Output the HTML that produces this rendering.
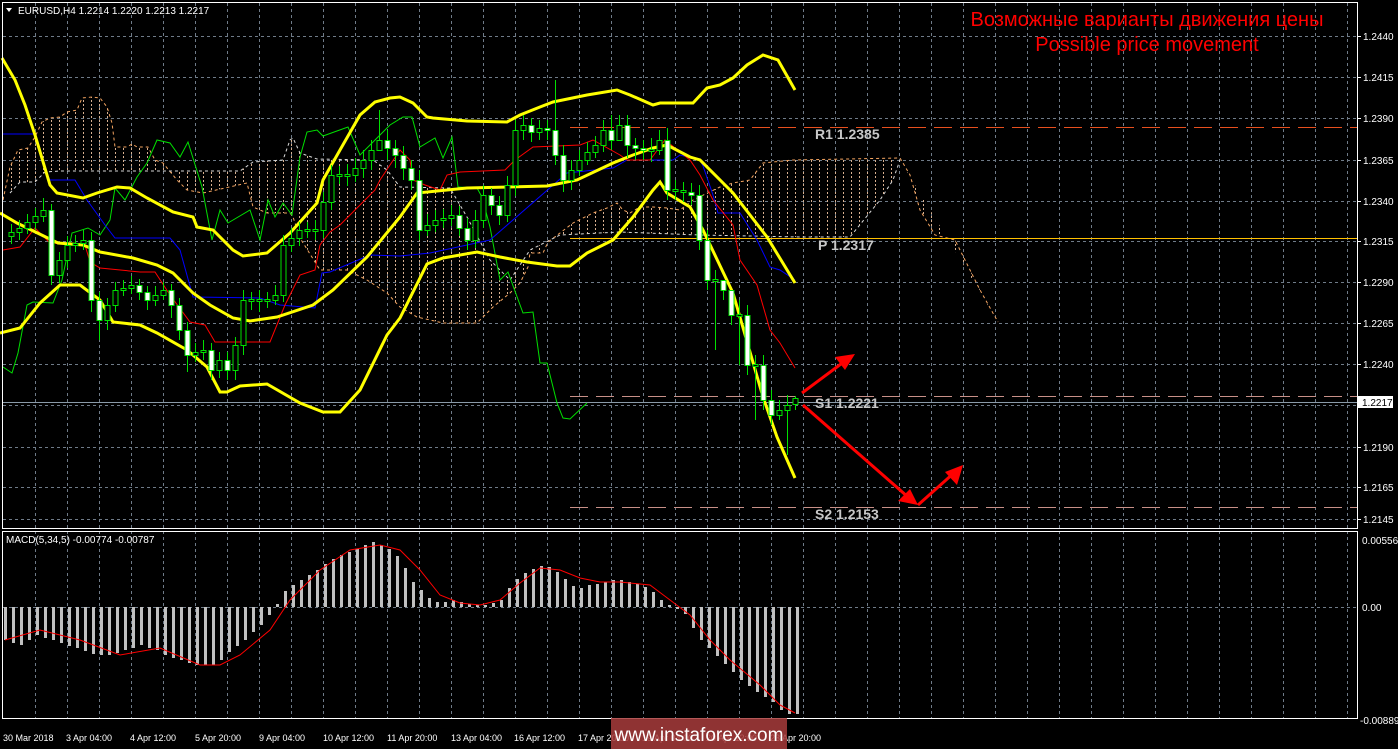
<!DOCTYPE html>
<html><head><meta charset="utf-8"><style>
html,body{margin:0;padding:0;background:#000;width:1398px;height:749px;overflow:hidden}
svg{display:block}
text{font-family:"Liberation Sans",sans-serif}
</style></head><body>
<svg width="1398" height="749" xmlns="http://www.w3.org/2000/svg">
<defs>
<pattern id="hatch" width="8" height="4" patternUnits="userSpaceOnUse">
<rect x="3" y="0" width="1" height="2" fill="#d8b090"/>
</pattern>
</defs>
<rect width="1398" height="749" fill="#000"/>
<!-- grid -->
<path stroke="#6f7b88" stroke-width="1" stroke-dasharray="3,3" fill="none" d="M35.5 3V718M67.5 3V718M99.5 3V718M131.5 3V718M163.5 3V718M195.5 3V718M227.5 3V718M259.5 3V718M291.5 3V718M323.5 3V718M355.5 3V718M387.5 3V718M419.5 3V718M451.5 3V718M483.5 3V718M515.5 3V718M547.5 3V718M579.5 3V718M611.5 3V718M643.5 3V718M675.5 3V718M707.5 3V718M739.5 3V718M771.5 3V718M803.5 3V718M835.5 3V718M867.5 3V718M899.5 3V718M931.5 3V718M963.5 3V718M995.5 3V718M1027.5 3V718M1059.5 3V718M1091.5 3V718M1123.5 3V718M1155.5 3V718M1187.5 3V718M1219.5 3V718M1251.5 3V718M1283.5 3V718M1315.5 3V718M1347.5 3V718
M3 36.5H1357M3 77.5H1357M3 118.5H1357M3 160.5H1357M3 201.5H1357M3 241.5H1357M3 282.5H1357M3 323.5H1357M3 364.5H1357M3 405.5H1357M3 447.5H1357M3 487.5H1357M3 519.5H1357M3 607.5H1357"/>
<!-- cloud hatch -->
<polygon fill="url(#hatch)" fill-rule="evenodd" points="3,200 10,167 18,150 28,148 35,137 42,122 50,118 60,117 67,112 77,110 82,98 92,97 100,98 107,107 112,123 115,147 127,147 132,144 137,147 148,147 155,160 163,163 177,180 187,190 203,193 247,183 253,207 267,213 290,213 293,217 300,238 320,270 347,270 367,280 387,293 400,307 417,317 443,323 477,323 493,307 510,293 520,283 528,267 530,253 543,253 548,242 560,233 573,223 593,213 607,208 617,203 623,210 630,213 640,207 653,207 667,208 680,210 693,200 720,187 733,183 750,180 763,163 793,160 900,158 910,175 920,210 935,235 955,240 965,260 980,290 998,322 900,160 893,180 880,200 850,237 800,237 700,235 620,232 560,235 530,250 510,280 490,260 467,217 450,188 400,187 387,170 373,160 317,159 300,153 293,138 290,140 283,160 253,162 240,171 60,171 45,172 35,182 20,182 10,193"/>
<polyline fill="none" stroke="#f4a460" stroke-width="1" stroke-dasharray="3,3" points="3,200 10,167 18,150 28,148 35,137 42,122 50,118 60,117 67,112 77,110 82,98 92,97 100,98 107,107 112,123 115,147 127,147 132,144 137,147 148,147 155,160 163,163 177,180 187,190 203,193 247,183 253,207 267,213 290,213 293,217 300,238 320,270 347,270 367,280 387,293 400,307 417,317 443,323 477,323 493,307 510,293 520,283 528,267 530,253 543,253 548,242 560,233 573,223 593,213 607,208 617,203 623,210 630,213 640,207 653,207 667,208 680,210 693,200 720,187 733,183 750,180 763,163 793,160 900,158 910,175 920,210 935,235 955,240 965,260 980,290 998,322"/>
<polyline fill="none" stroke="#d8d8d8" stroke-width="1" stroke-dasharray="3,3" points="10,193 20,182 35,182 45,172 60,171 240,171 253,162 283,160 290,140 293,138 300,153 317,159 373,160 387,170 400,187 450,188 467,217 490,260 510,280 530,250 560,235 620,232 700,235 800,237 850,237 880,200 893,180 900,160"/>
<!-- levels -->
<line x1="570" y1="127.5" x2="1357" y2="127.5" stroke="#e8501e" stroke-dasharray="18,8"/>
<line x1="570" y1="238.5" x2="1357" y2="238.5" stroke="#ffc000"/>
<line x1="570" y1="396.5" x2="1357" y2="396.5" stroke="#c89088" stroke-dasharray="18,8"/>
<line x1="570" y1="507.5" x2="1357" y2="507.5" stroke="#c89088" stroke-dasharray="18,8"/>
<line x1="2" y1="402.5" x2="1357" y2="402.5" stroke="#8a9aa8"/>
<!-- lines -->
<polyline fill="none" stroke="#00e000" stroke-width="1" points="3,367 12,373 18,353 27,305 33,302 53,303 62,280 72,233 88,228 100,235 110,220 115,188 125,200 137,177 147,163 157,140 170,143 180,157 188,142 202,187 212,240 220,210 228,223 250,210 260,240 268,200 275,217 283,203 292,215 300,157 307,132 317,130 323,136 348,127 360,155 375,140 390,125 403,117 412,117 420,147 435,138 443,158 452,137 458,187 477,188 482,197 490,227 500,280 508,272 523,313 533,312 540,363 547,363 557,403 563,418 570,419 587,403"/>
<polyline fill="none" stroke="#0000ff" stroke-width="1" points="3,134 35,134 40,150 45,170 50,180 75,180 87,200 105,225 115,238 170,238 180,250 193,297 260,298 280,305 315,308 322,273 330,272 370,255 400,256 430,253 467,245 490,240 567,173 613,168 627,160 673,160 680,155 700,160 703,166 713,195 718,213 740,213 757,240 770,267 780,270 795,280"/>
<polyline fill="none" stroke="#ff0000" stroke-width="1" points="3,250 20,247 35,228 50,243 85,245 90,262 100,268 140,272 155,272 170,295 190,322 205,325 215,342 270,342 285,305 300,275 315,270 320,245 330,232 340,225 360,205 375,190 380,180 400,150 410,160 413,180 425,185 440,190 447,175 460,172 505,170 515,160 533,147 580,145 593,140 620,155 627,160 650,160 665,140 690,160 700,175 713,200 733,225 740,260 757,285 770,330 780,343 795,368"/>
<g fill="none" stroke="#ffff00" stroke-width="3">
<polyline points="2,58 15,80 25,105 35,135 50,185 57,193 83,198 97,193 117,187 130,188 147,198 173,212 193,217 197,227 213,230 233,250 243,256 267,253 290,233 317,203 323,180 340,150 360,115 375,102 390,98 400,97 413,103 427,117 433,118 467,121 507,122 520,115 540,107 553,102 587,95 617,90 630,95 653,105 660,103 693,103 707,88 720,85 733,78 747,65 763,55 778,60 795,90"/>
<polyline points="0,213 17,223 58,243 83,245 100,252 133,258 157,265 173,273 193,293 210,305 233,318 250,321 277,317 313,305 333,290 367,257 400,217 417,193 467,188 547,186 577,180 613,163 633,155 653,148 667,145 690,157 700,160 733,193 767,237 795,283"/>
<polyline points="0,333 20,328 40,303 60,285 80,285 100,300 113,322 140,325 157,333 187,350 207,367 220,392 227,392 240,386 267,384 300,403 323,412 340,412 360,390 387,335 400,318 427,264 443,258 477,252 500,257 527,262 557,266 570,266 587,253 613,240 633,217 653,190 660,182 667,193 690,207 703,230 733,293 763,397 777,437 795,478"/>
</g>
<!-- candle wicks -->
<path stroke="#00e000" stroke-width="1" fill="none" d="M11.5 224V244M19.5 220V240M27.5 214V234M35.5 208V230M43.5 198V222M51.5 204V285M59.5 252V283M67.5 236V268M75.5 235V252M83.5 230V250M91.5 232V312M99.5 292V340M107.5 298V330M115.5 282V312M123.5 280V296M131.5 276V294M139.5 279V300M147.5 286V310M155.5 286V306M163.5 282V300M171.5 284V318M179.5 298V340M187.5 322V372M195.5 343V362M203.5 340V360M211.5 343V380M219.5 352V378M227.5 352V380M235.5 337V380M243.5 290V355M251.5 292V310M259.5 290V312M267.5 292V308M275.5 285V305M283.5 235V302M291.5 228V252M299.5 222V246M307.5 222V238M315.5 220V240M323.5 192V238M331.5 165V210M339.5 166V184M347.5 164V186M355.5 158V182M363.5 150V178M371.5 140V170M379.5 110V150M387.5 130V160M395.5 140V168M403.5 146V180M411.5 160V190M419.5 170V240M427.5 214V236M435.5 210V232M443.5 209V228M451.5 205V226M459.5 206V236M467.5 218V250M475.5 210V248M483.5 185V228M491.5 188V215M499.5 196V225M507.5 176V222M515.5 120V196M523.5 115V140M531.5 118V142M539.5 120V140M547.5 120V140M555.5 80V165M563.5 145V192M571.5 160V190M579.5 150V176M587.5 142V165M595.5 136V158M603.5 120V152M611.5 115V150M619.5 115V140M627.5 115V158M635.5 138V160M643.5 140V160M651.5 138V162M659.5 130V155M667.5 128V200M675.5 180V200M683.5 182V202M691.5 183V205M699.5 185V250M707.5 230V290M715.5 270V350M723.5 280V300M731.5 305V325M739.5 300V365M747.5 305V375M755.5 355V420M763.5 355V410M771.5 390V425M779.5 400V420M787.5 395V455M795.5 396V410"/>
<g stroke="#00e000" stroke-width="1">
<g fill="#000">
<rect x="9" y="232.5" width="5" height="4"/><rect x="17" y="228.5" width="5" height="4"/><rect x="25" y="222.5" width="5" height="6"/><rect x="33" y="216.5" width="5" height="6"/><rect x="41" y="210.5" width="5" height="6"/>
<rect x="57" y="260.5" width="5" height="15"/><rect x="65" y="245.5" width="5" height="15"/><rect x="73" y="243.5" width="5" height="2"/><rect x="81" y="240.5" width="5" height="3"/>
<rect x="105" y="305.5" width="5" height="15"/><rect x="113" y="290.5" width="5" height="15"/><rect x="121" y="288.5" width="5" height="2"/><rect x="129" y="285.5" width="5" height="3"/>
<rect x="153" y="295.5" width="5" height="5"/><rect x="161" y="290.5" width="5" height="5"/>
<rect x="193" y="352.5" width="5" height="3"/><rect x="201" y="350.5" width="5" height="2"/><rect x="217" y="360.5" width="5" height="10"/><rect x="233" y="345.5" width="5" height="25"/><rect x="241" y="300.5" width="5" height="45"/>
<rect x="249" y="299.5" width="5" height="2"/><rect x="257" y="299.5" width="5" height="2"/><rect x="265" y="299.5" width="5" height="2"/><rect x="273" y="295.5" width="5" height="5"/><rect x="281" y="245.5" width="5" height="50"/><rect x="289" y="238.5" width="5" height="7"/><rect x="297" y="230.5" width="5" height="8"/><rect x="305" y="229.5" width="5" height="2"/><rect x="313" y="229.5" width="5" height="2"/>
<rect x="321" y="202.5" width="5" height="28"/><rect x="329" y="175.5" width="5" height="27"/><rect x="337" y="174.5" width="5" height="2"/><rect x="345" y="174.5" width="5" height="2"/><rect x="353" y="168.5" width="5" height="7"/><rect x="361" y="160.5" width="5" height="8"/><rect x="369" y="150.5" width="5" height="10"/><rect x="377" y="140.5" width="5" height="10"/>
<rect x="425" y="225.5" width="5" height="5"/><rect x="433" y="220.5" width="5" height="5"/><rect x="441" y="218.5" width="5" height="2"/><rect x="449" y="215.5" width="5" height="3"/><rect x="473" y="220.5" width="5" height="20"/><rect x="481" y="195.5" width="5" height="25"/><rect x="505" y="185.5" width="5" height="30"/><rect x="513" y="130.5" width="5" height="55"/>
<rect x="521" y="125.5" width="5" height="5"/><rect x="537" y="128.5" width="5" height="4"/><rect x="569" y="170.5" width="5" height="10"/><rect x="577" y="160.5" width="5" height="10"/><rect x="585" y="152.5" width="5" height="8"/><rect x="593" y="145.5" width="5" height="7"/><rect x="601" y="130.5" width="5" height="15"/><rect x="617" y="125.5" width="5" height="15"/><rect x="649" y="149.5" width="5" height="2"/><rect x="657" y="140.5" width="5" height="10"/>
<rect x="673" y="189.5" width="5" height="2"/><rect x="681" y="190.5" width="5" height="2"/><rect x="713" y="279.5" width="5" height="2"/><rect x="737" y="314.5" width="5" height="2"/><rect x="753" y="364.5" width="5" height="2"/><rect x="777" y="410.5" width="5" height="5"/><rect x="785" y="405.5" width="5" height="5"/><rect x="793" y="398.5" width="5" height="6"/>
</g>
<g fill="#fff">
<rect x="49" y="210.5" width="5" height="65"/><rect x="89" y="240.5" width="5" height="60"/><rect x="97" y="300.5" width="5" height="20"/><rect x="137" y="285.5" width="5" height="7"/><rect x="145" y="292.5" width="5" height="8"/><rect x="169" y="290.5" width="5" height="15"/><rect x="177" y="305.5" width="5" height="25"/><rect x="185" y="330.5" width="5" height="25"/><rect x="209" y="350.5" width="5" height="20"/><rect x="225" y="360.5" width="5" height="10"/>
<rect x="385" y="140.5" width="5" height="8"/><rect x="393" y="148.5" width="5" height="7"/><rect x="401" y="155.5" width="5" height="13"/><rect x="409" y="168.5" width="5" height="12"/><rect x="417" y="180.5" width="5" height="50"/><rect x="457" y="215.5" width="5" height="13"/><rect x="465" y="228.5" width="5" height="12"/><rect x="489" y="195.5" width="5" height="10"/><rect x="497" y="205.5" width="5" height="10"/>
<rect x="529" y="125.5" width="5" height="7"/><rect x="545" y="128.5" width="5" height="2"/><rect x="553" y="130.5" width="5" height="25"/><rect x="561" y="155.5" width="5" height="25"/><rect x="609" y="130.5" width="5" height="10"/><rect x="625" y="125.5" width="5" height="20"/><rect x="633" y="145.5" width="5" height="3"/><rect x="641" y="148.5" width="5" height="2"/><rect x="665" y="140.5" width="5" height="50"/><rect x="689" y="192.5" width="5" height="3"/>
<rect x="697" y="195.5" width="5" height="45"/><rect x="705" y="240.5" width="5" height="40"/><rect x="721" y="280.5" width="5" height="10"/><rect x="729" y="290.5" width="5" height="25"/><rect x="745" y="315.5" width="5" height="50"/><rect x="761" y="365.5" width="5" height="35"/><rect x="769" y="400.5" width="5" height="15"/>
</g>
</g>
<!-- arrows -->
<g stroke="#ff0000" stroke-width="3" fill="#ff0000">
<line x1="802" y1="393" x2="845" y2="361"/>
<polygon points="855,354 835,357 845,370" stroke="none"/>
<line x1="803" y1="405" x2="908" y2="497"/>
<polygon points="918,505 898,501 910,489" stroke="none"/>
<line x1="918" y1="505" x2="955" y2="472"/>
<polygon points="963,465 957,485 945,472" stroke="none"/>
</g>
<g font-family="Liberation Mono,monospace" font-size="14" font-weight="bold" fill="#c8c8c8">
<text x="815" y="139">R1 1.2385</text>
<text x="818" y="250">P 1.2317</text>
<text x="815" y="408">S1 1.2221</text>
<text x="815" y="519">S2 1.2153</text>
</g>
<text x="1147" y="26" fill="#ff0000" font-size="20" text-anchor="middle">Возможные варианты движения цены</text>
<text x="1147" y="51" fill="#ff0000" font-size="20" text-anchor="middle">Possible price movement</text>
<!-- MACD bars -->
<path stroke="#c0c0c0" stroke-width="3" fill="none" d="M5.5 607V640M13.5 607V643M21.5 607V645M29.5 607V640M37.5 607V635M45.5 607V638M53.5 607V640M61.5 607V643M69.5 607V646M77.5 607V648M85.5 607V651M93.5 607V654M101.5 607V655M109.5 607V655M117.5 607V653M125.5 607V650M133.5 607V648M141.5 607V645M149.5 607V648M157.5 607V650M165.5 607V655M173.5 607V658M181.5 607V660M189.5 607V663M197.5 607V665M205.5 607V665M213.5 607V665M221.5 607V660M229.5 607V652M237.5 607V646M245.5 607V640M253.5 607V632M261.5 607V625M269.5 607V615M277.5 607V604M285.5 607V591M293.5 607V585M301.5 607V580M309.5 607V575M317.5 607V570M325.5 607V564M333.5 607V559M341.5 607V555M349.5 607V552M357.5 607V549M365.5 607V545M373.5 607V542M381.5 607V545M389.5 607V549M397.5 607V556M405.5 607V568M413.5 607V582M421.5 607V590M429.5 607V598M437.5 607V602M445.5 607V602M453.5 607V600M461.5 607V602M469.5 607V604M477.5 607V605M485.5 607V605M493.5 607V603M501.5 607V600M509.5 607V588M517.5 607V579M525.5 607V573M533.5 607V569M541.5 607V566M549.5 607V567M557.5 607V572M565.5 607V579M573.5 607V586M581.5 607V588M589.5 607V585M597.5 607V584M605.5 607V582M613.5 607V580M621.5 607V580M629.5 607V582M637.5 607V584M645.5 607V587M653.5 607V592M661.5 607V600M669.5 607V605M677.5 607V609M685.5 607V614M693.5 607V628M701.5 607V640M709.5 607V648M717.5 607V656M725.5 607V664M733.5 607V672M741.5 607V680M749.5 607V686M757.5 607V692M765.5 607V697M773.5 607V702M781.5 607V710M789.5 607V714M797.5 607V714"/>
<polyline fill="none" stroke="#ff0000" stroke-width="1" points="5,640 40,630 80,640 120,655 160,648 200,665 220,665 240,655 270,630 290,600 320,570 350,550 380,545 400,550 420,570 440,595 460,603 480,605 500,600 520,583 540,568 560,570 580,578 600,582 620,582 650,585 670,600 690,615 710,640 730,660 760,685 780,705 795,713"/>
<!-- frames -->
<rect x="2.5" y="2.5" width="1355" height="526" fill="none" stroke="#fff"/>
<rect x="2.5" y="531.5" width="1355" height="187" fill="none" stroke="#fff"/>
<g fill="#fff" font-size="10">
<polygon points="6,8 12,8 9,12"/>
<text x="18" y="14">EURUSD,H4  1.2214 1.2220 1.2213 1.2217</text>
<text x="6" y="543">MACD(5,34,5) -0.00774 -0.00787</text>
</g>
<path stroke="#fff" d="M1357 36.5h4M1357 77.5h4M1357 118.5h4M1357 160.5h4M1357 201.5h4M1357 241.5h4M1357 282.5h4M1357 323.5h4M1357 364.5h4M1357 447.5h4M1357 487.5h4M1357 519.5h4"/>
<g fill="#fff" font-size="10">
<text x="1363" y="40">1.2440</text><text x="1363" y="81">1.2415</text><text x="1363" y="122">1.2390</text><text x="1363" y="164">1.2365</text><text x="1363" y="205">1.2340</text><text x="1363" y="245">1.2315</text><text x="1363" y="286">1.2290</text><text x="1363" y="327">1.2265</text><text x="1363" y="368">1.2240</text><text x="1363" y="451">1.2190</text><text x="1363" y="491">1.2165</text><text x="1363" y="523">1.2145</text>
<text x="1362" y="544">0.00556</text><text x="1362" y="611">0.00</text><text x="1360" y="724">-0.00889</text>
</g>
<g fill="#fff" font-size="9">
<text x="3" y="741">30 Mar 2018</text><text x="66" y="741">3 Apr 04:00</text><text x="130" y="741">4 Apr 12:00</text><text x="195" y="741">5 Apr 20:00</text><text x="259" y="741">9 Apr 04:00</text><text x="323" y="741">10 Apr 12:00</text><text x="387" y="741">11 Apr 20:00</text><text x="451" y="741">13 Apr 04:00</text><text x="514" y="741">16 Apr 12:00</text><text x="578" y="741">17 Apr 20:00</text><text x="642" y="741">19 Apr 04:00</text><text x="706" y="741">20 Apr 12:00</text><text x="770" y="741">23 Apr 20:00</text>
</g>
<rect x="1358" y="396" width="35" height="12" fill="#fff"/>
<text x="1362" y="406" font-size="10" fill="#000">1.2217</text>
<rect x="611" y="718" width="176" height="31" fill="#a83c3c" opacity="0.85"/>
<text x="699" y="741" font-size="19" fill="#fff" text-anchor="middle">www.instaforex.com</text>
</svg>
</body></html>
